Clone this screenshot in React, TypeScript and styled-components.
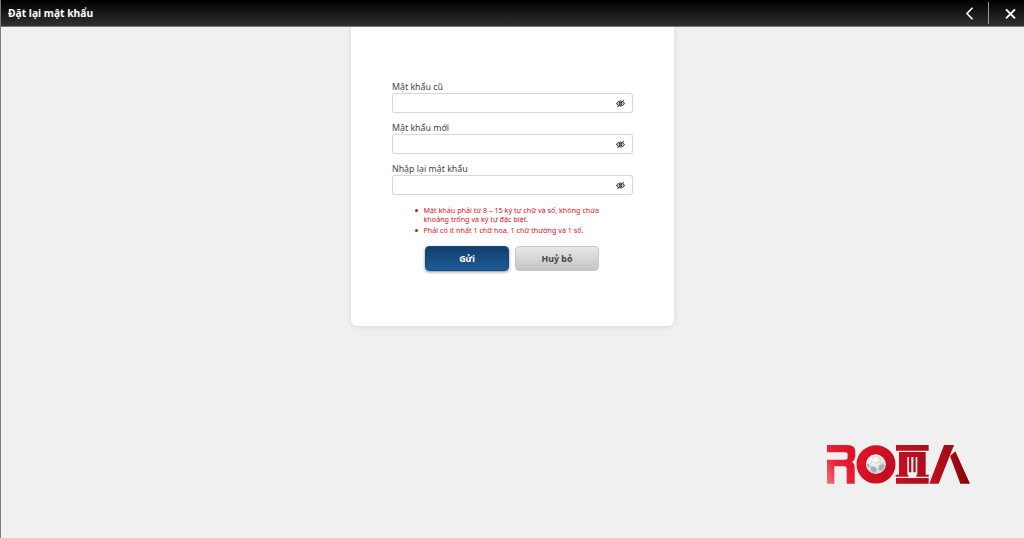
import React, { useState } from "react";
import styled, { createGlobalStyle } from "styled-components";

const GlobalStyle = createGlobalStyle`
  * {
    box-sizing: border-box;
  }

  body {
    margin: 0;
    background: #f0f0f0;
    font-family: "Noto Sans", "Open Sans", sans-serif;
  }
`;

const Page = styled.div`
  display: flex;
  flex-direction: column;
  height: 100vh;
  overflow: hidden;
  border-left: 1px solid #7c7c7c;
`;

const Header = styled.header`
  display: flex;
  align-items: center;
  flex: none;
  height: 27px;
  margin-left: -1px;
  padding: 0 8px;
  background: linear-gradient(#000, #303030);
  border-bottom: 1px solid #777;
`;

const Title = styled.h1`
  flex: 1;
  margin: 0;
  color: #fff;
  font-size: 10.3px;
  line-height: 26px;
  font-weight: 700;
`;

const HeaderButton = styled.button`
  display: flex;
  padding: 0;
  border: none;
  background: none;
  color: #fff;
`;

const Divider = styled.span`
  width: 1px;
  height: 22px;
  margin: 0 16px 0 14px;
  background: #999;
`;

const Card = styled.main`
  width: 323px;
  height: 298.5px;
  margin: 0 auto;
  padding: 53px 41px 0;
  background: #fff;
  border-radius: 0 0 6px 6px;
  box-shadow: 0 1px 6px rgba(0, 0, 0, 0.1);
`;

const Field = styled.div`
  height: 41px;
`;

const Label = styled.label`
  display: block;
  height: 13px;
  color: #444;
  font-size: 8.8px;
  line-height: 14px;
  white-space: nowrap;
`;

const InputBox = styled.div`
  display: flex;
  align-items: center;
  height: 20px;
  padding-right: 7px;
  background: #fff;
  border: 1px solid #d8d8d8;
  border-radius: 3px;
  box-shadow: 0 0 1px rgba(0, 0, 0, 0.15);
`;

const Input = styled.input`
  flex: 1;
  min-width: 0;
  padding: 0 6px;
  border: none;
  outline: none;
  background: transparent;
  font-size: 9px;
`;

const EyeButton = styled.button`
  display: flex;
  padding: 0;
  border: none;
  background: none;
  color: #444;
`;

const Rules = styled.ul`
  margin: 3px 0 0 21px;
  padding: 0 0 0 10.5px;
  width: 216px;
  list-style: none;
  color: #d8141c;
  font-size: 7.2px;
  line-height: 9px;
`;

const Rule = styled.li`
  position: relative;
  margin-bottom: 2px;
  white-space: nowrap;

  &::before {
    content: "";
    position: absolute;
    left: -9px;
    top: 3px;
    width: 3px;
    height: 3px;
    border-radius: 50%;
    background: #d8141c;
  }
`;

const Actions = styled.div`
  display: flex;
  justify-content: center;
  gap: 6px;
  margin-top: 11px;
  padding-right: 1px;
`;

const ActionButton = styled.button<{ $primary?: boolean }>`
  width: 84px;
  height: 25px;
  padding: 0;
  border: 1px solid ${(p) => (p.$primary ? "#154a7c" : "#c6c6c6")};
  border-radius: 4px;
  background: ${(p) =>
    p.$primary
      ? "linear-gradient(#113f6b, #1d5c98)"
      : "linear-gradient(#e8e8e8, #c4c4c4)"};
  box-shadow: ${(p) => (p.$primary ? "0 1px 3px rgba(0, 0, 0, 0.45)" : "none")};
  color: ${(p) => (p.$primary ? "#fff" : "#444")};
  font-family: inherit;
  font-size: 8.8px;
  font-weight: 700;
`;

const LogoWrap = styled.div`
  position: fixed;
  right: 44px;
  bottom: 44px;
  display: flex;
`;

const BackIcon = () => (
  <svg width="9" height="14" viewBox="0 0 9 14" fill="none" stroke="currentColor" strokeWidth="1.6">
    <path d="M7.500 1.800 2 7.500l5.500 5.700" />
  </svg>
);

const CloseIcon = () => (
  <svg width="11" height="11" viewBox="0 0 11 11" fill="none" stroke="currentColor" strokeWidth="1.900">
    <path d="m1 1.300 9 9M10 1.300l-9 9" />
  </svg>
);

const EyeSlashIcon = () => (
  <svg width="9" height="9" viewBox="0 0 18 18" fill="none" stroke="currentColor" strokeWidth="2.100">
    <path d="M1.200 9C4 4.500 7 4 9 4s5 .5 7.800 5C14 13.500 11 14 9 14s-5-.5-7.800-5z" />
    <circle cx="9" cy="9" r="2.800" />
    <path d="M3 16 15.500 2" />
  </svg>
);

const RomaLogo = () => (
  <svg width="164" height="60" viewBox="0 0 492 180">
    <defs>
      <linearGradient id="letterR" x1="0" y1="1" x2="0.9" y2="0.3">
        <stop offset="0" stopColor="#f4707a" />
        <stop offset="0.45" stopColor="#e8283a" />
        <stop offset="1" stopColor="#dc1428" />
      </linearGradient>
      <linearGradient id="letterO" x1="0" y1="0" x2="1" y2="0.4">
        <stop offset="0" stopColor="#df1429" />
        <stop offset="1" stopColor="#c40f20" />
      </linearGradient>
      <linearGradient id="letterM" x1="0" y1="0" x2="1" y2="0">
        <stop offset="0" stopColor="#c41122" />
        <stop offset="1" stopColor="#ad0c1b" />
      </linearGradient>
      <linearGradient id="letterA" x1="0" y1="0" x2="1" y2="0">
        <stop offset="0" stopColor="#c41020" />
        <stop offset="1" stopColor="#850609" />
      </linearGradient>
      <radialGradient id="ball" cx="0.4" cy="0.3" r="0.75">
        <stop offset="0" stopColor="#fff" />
        <stop offset="1" stopColor="#cfd1d6" />
      </radialGradient>
    </defs>
    <path
      d="M33 33h62q23 0 23 21v10q0 14-10 20 8 5 8 17v48H92v-44q0-8-8-8H55v52H33V77h54q8 0 8-8v-7q0-7-8-7H33z"
      fill="url(#letterR)"
    />
    <ellipse cx="180" cy="91" rx="44" ry="43" fill="#f4f4f4" stroke="url(#letterO)" strokeWidth="29" />
    <circle cx="179" cy="90" r="29" fill="url(#ball)" />
    <path d="m164 96 14 3 5 10-7 8-12-7zM190 94l12-5 4 9-9 13-10-5zM154 88l7 5-2 8-6-5z" fill="#a9adb6" />
    <path d="m170 70 12-4 12 7-3 12-15 2-8-8zM161 93l7-12M191 85l8 6M183 108h8" fill="none" stroke="#d0c7b4" strokeWidth="2" />
    <path
      d="M240 33h98v17h-98zM249 54h80v68h9v6h-37v-6h3V69h-5v46h-7V69h-6v46h-7V69h-5v53h3v6h-38v-6h10zM240 132h98v17h-98z"
      fill="url(#letterM)"
    />
    <path d="M384 33h30l-46 116h-28zM402 66l16-14 44 97h-29z" fill="url(#letterA)" />
  </svg>
);

interface PasswordFieldProps {
  id: string;
  label: string;
}

const PasswordField: React.FC<PasswordFieldProps> = ({ id, label }) => {
  const [visible, setVisible] = useState(false);
  const [value, setValue] = useState("");

  return (
    <Field>
      <Label htmlFor={id}>{label}</Label>
      <InputBox>
        <Input
          id={id}
          type={visible ? "text" : "password"}
          value={value}
          onChange={(e) => setValue(e.target.value)}
        />
        <EyeButton type="button" onClick={() => setVisible(!visible)}>
          <EyeSlashIcon />
        </EyeButton>
      </InputBox>
    </Field>
  );
};

const App: React.FC = () => (
  <>
    <GlobalStyle />
    <Page>
      <Header>
        <Title>Đặt lại mật khẩu</Title>
        <HeaderButton type="button">
          <BackIcon />
        </HeaderButton>
        <Divider />
        <HeaderButton type="button">
          <CloseIcon />
        </HeaderButton>
      </Header>
      <Card>
        <PasswordField id="old" label="Mật khẩu cũ" />
        <PasswordField id="new" label="Mật khẩu mới" />
        <PasswordField id="confirm" label="Nhập lại mật khẩu" />
        <Rules>
          <Rule>
            Mật khẩu phải từ 8 – 15 ký tự chữ và số, không chứa
            <br />
            khoảng trống và ký tự đặc biệt.
          </Rule>
          <Rule>Phải có ít nhất 1 chữ hoa, 1 chữ thường và 1 số.</Rule>
        </Rules>
        <Actions>
          <ActionButton type="button" $primary>
            Gửi
          </ActionButton>
          <ActionButton type="button">Huỷ bỏ</ActionButton>
        </Actions>
      </Card>
      <LogoWrap>
        <RomaLogo />
      </LogoWrap>
    </Page>
  </>
);

export default App;
